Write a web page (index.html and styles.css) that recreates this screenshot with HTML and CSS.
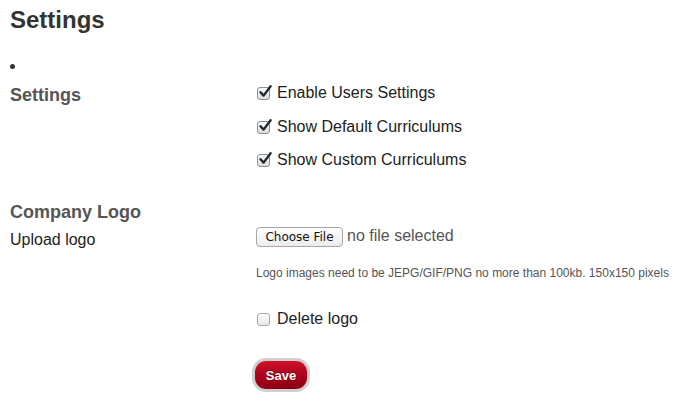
FILE: index.html
```html
<!DOCTYPE html>
<html>
<head>
<meta charset="utf-8">
<link rel="stylesheet" href="styles.css">
</head>
<body>
<h1 class="title">Settings</h1>
<div class="bullet-row"><span class="dot"></span></div>
<div class="row settings-row">
  <div class="label strong">Settings</div>
  <div class="field checks">
    <label class="check"><span class="box checked"><svg viewBox="0 0 16 16" width="16" height="16"><path d="M3.5 8.2 L6.6 11.6 L13.6 2.2" fill="none" stroke="#1f2a33" stroke-width="2.4" stroke-linecap="round" stroke-linejoin="round"/></svg></span>Enable Users Settings</label>
    <label class="check"><span class="box checked"><svg viewBox="0 0 16 16" width="16" height="16"><path d="M3.5 8.2 L6.6 11.6 L13.6 2.2" fill="none" stroke="#1f2a33" stroke-width="2.4" stroke-linecap="round" stroke-linejoin="round"/></svg></span>Show Default Curriculums</label>
    <label class="check"><span class="box checked"><svg viewBox="0 0 16 16" width="16" height="16"><path d="M3.5 8.2 L6.6 11.6 L13.6 2.2" fill="none" stroke="#1f2a33" stroke-width="2.4" stroke-linecap="round" stroke-linejoin="round"/></svg></span>Show Custom Curriculums</label>
  </div>
</div>
<div class="section-title">Company Logo</div>
<div class="row upload-row">
  <div class="label plain">Upload logo</div>
  <div class="field">
    <div class="file"><span class="file-btn">Choose File</span><span class="file-name">no file selected</span></div>
    <p class="help">Logo images need to be JEPG/GIF/PNG no more than 100kb. 150x150 pixels</p>
    <label class="check delete"><span class="box"></span>Delete logo</label>
    <button class="save">Save</button>
  </div>
</div>
</body>
</html>
```

FILE: styles.css
```css
* { box-sizing: border-box; }
html, body { margin: 0; padding: 0; background: #fff; }
body {
  font-family: "Liberation Sans", Arial, Helvetica, sans-serif;
  color: #333;
  padding: 5px 10px 0 10px;
  width: 700px;
  height: 407px;
  overflow: hidden;
}
.title {
  margin: 0;
  font-size: 24px;
  line-height: 30px;
  font-weight: bold;
  color: #333;
}
.bullet-row {
  height: 20px;
  margin-top: 21px;
  display: flex;
  align-items: center;
}
.dot {
  width: 5px;
  height: 5px;
  border-radius: 50%;
  background: #333;
  margin-left: 0;
}
.row {
  display: grid;
  grid-template-columns: 246px 1fr;
}
.settings-row { margin-top: 7px; }
.label { line-height: 20px; }
.label.strong {
  font-size: 18px;
  font-weight: bold;
  color: #555;
  margin-top: 2px;
}
.label.plain {
  font-size: 16px;
  color: #222;
  margin-top: 3px;
}
.checks {
  display: flex;
  flex-direction: column;
  gap: 13.5px;
}
.check {
  display: flex;
  align-items: center;
  height: 20px;
  font-size: 16px;
  line-height: 20px;
  color: #222;
}
.box {
  position: relative;
  width: 13px;
  height: 13px;
  margin: 1px 7px 0 1px;
  border: 1px solid #8e8e8e;
  border-radius: 3px;
  background: linear-gradient(#fcfcfc, #dcdcdc);
  flex: none;
}
.box svg {
  position: absolute;
  left: -1px;
  top: -4px;
}
.section-title {
  margin-top: 32px;
  font-size: 18px;
  line-height: 20px;
  font-weight: bold;
  color: #555;
}
.upload-row { margin-top: 5px; }
.file {
  display: flex;
  align-items: center;
  height: 20px;
}
.file-btn {
  height: 20px;
  width: 87px;
  display: flex;
  align-items: center;
  justify-content: center;
  font-family: "DejaVu Sans", sans-serif;
  font-size: 12px;
  color: #111;
  border: 1px solid #a6a6a6;
  border-radius: 4px;
  background: linear-gradient(#ffffff, #ececec);
}
.file-name {
  margin-left: 4px;
  font-size: 16px;
  line-height: 20px;
  color: #555;
  position: relative;
  top: -1px;
}
.help {
  margin: 18px 0 0 0;
  font-size: 12px;
  line-height: 16px;
  color: #555;
}
.delete { margin-top: 28px; }
.delete .box {
  border-color: #a9a9a9;
  background: linear-gradient(#ffffff, #e6e6e6);
}
.save {
  display: block;
  margin: 32px 0 0 -1px;
  width: 52px;
  height: 28px;
  padding: 0;
  border: none;
  border-radius: 11px;
  background: linear-gradient(#d1112a, #a4001a 60%, #8d0014);
  box-shadow: 0 0 0 3px #cfcfcf;
  color: #fff;
  font-family: "Liberation Sans", Arial, sans-serif;
  font-size: 13px;
  font-weight: bold;
  text-shadow: 0 -1px 0 rgba(0,0,0,0.3);
}
```
